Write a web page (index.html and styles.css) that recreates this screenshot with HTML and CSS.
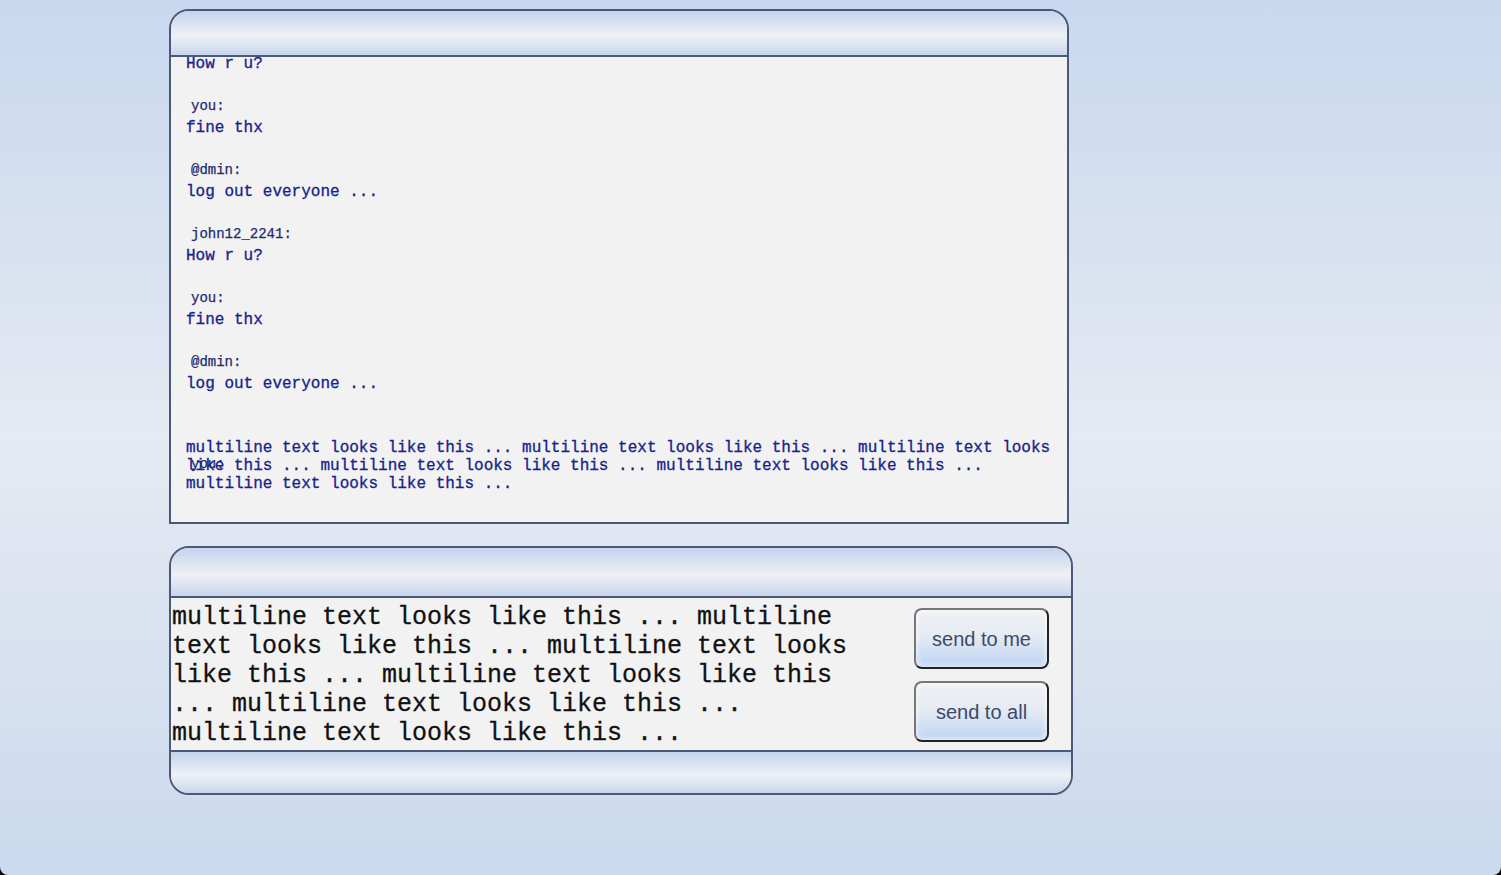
FILE: index.html
```html
<!DOCTYPE html>
<html>
<head>
<meta charset="utf-8">
<title>Chat</title>
<link rel="stylesheet" href="styles.css">
</head>
<body>
<div class="page">
  <section class="panel chat">
    <div class="bar bar-top"></div>
    <div class="log">
      <div class="log-inner">
        <div class="msg"><div class="who">john12_2241:</div><div class="text">How r u?</div></div>
        <div class="msg"><div class="who">you:</div><div class="text">fine thx</div></div>
        <div class="msg"><div class="who">@dmin:</div><div class="text">log out everyone ...</div></div>
        <div class="msg"><div class="who">john12_2241:</div><div class="text">How r u?</div></div>
        <div class="msg"><div class="who">you:</div><div class="text">fine thx</div></div>
        <div class="msg"><div class="who">@dmin:</div><div class="text">log out everyone ...</div></div>
        <div class="msg msg-last"><div class="who who-shifted">you:</div><div class="text">multiline text looks like this ... multiline text looks like this ... multiline text looks like this ... multiline text looks like this ... multiline text looks like this ... multiline text looks like this ...</div></div>
      </div>
    </div>
  </section>
  <section class="panel compose">
    <div class="bar bar-top compose-head"></div>
    <div class="compose-body">
      <div class="draft">multiline text looks like this ... multiline text looks like this ... multiline text looks like this ... multiline text looks like this ... multiline text looks like this ... multiline text looks like this ...</div>
      <div class="actions">
        <button class="btn">send to me</button>
        <button class="btn">send to all</button>
      </div>
    </div>
    <div class="bar bar-bottom"></div>
  </section>
</div>
</body>
</html>
```

FILE: styles.css
```css
html {
  background: #000;
}
body {
  margin: 0;
  height: 875px;
  overflow: hidden;
  border-radius: 0 0 8px 8px;
  background: linear-gradient(to bottom, #c8d8ef 0%, #d9e2f0 30%, #e6eaf2 50%, #dbe3f0 70%, #cad9ee 100%);
}
.page {
  padding: 9px 0 0 169px;
  display: flex;
  flex-direction: column;
  gap: 22px;
}
.panel {
  box-sizing: border-box;
  border: 2px solid #4b5878;
  border-radius: 20px 20px 0 0;
  background: #f2f2f2;
  overflow: hidden;
}
.chat {
  width: 900px;
  height: 515px;
  display: flex;
  flex-direction: column;
}
.bar {
  background: linear-gradient(to bottom, #c4d4ec 0%, #dbe3f0 30%, #eef0f5 55%, #dce4f1 78%, #c6d5ed 100%);
}
.bar-top {
  height: 44px;
  border-bottom: 2px solid #4b5878;
  flex: none;
}
.log {
  flex: 1;
  overflow: hidden;
  padding: 0 15px;
}
.log-inner {
  margin-top: -23px;
}
.msg {
  margin-bottom: 25px;
}
.who {
  font-family: "Liberation Mono", "Courier New", monospace;
  font-size: 14px;
  line-height: 16px;
  height: 16px;
  color: #1d2a6f;
  -webkit-text-stroke: 0.25px #1d2a6f;
  padding-left: 5px;
  margin-bottom: 5px;
}
.who-shifted {
  position: relative;
  top: 38px;
}
.text {
  font-family: "Liberation Mono", "Courier New", monospace;
  font-size: 16px;
  line-height: 18px;
  color: #17238c;
  -webkit-text-stroke: 0.3px #17238c;
}
.compose {
  width: 904px;
  border-radius: 20px;
}
.compose-head {
  height: 48px;
}
.compose-body {
  display: flex;
  justify-content: space-between;
  align-items: flex-start;
  height: 152px;
  border-bottom: 2px solid #4b5878;
  box-sizing: content-box;
}
.draft {
  width: 710px;
  padding: 5px 0 0 1px;
  font-family: "Liberation Mono", "Courier New", monospace;
  font-size: 25px;
  line-height: 29px;
  color: #111;
  -webkit-text-stroke: 0.3px #111;
}
.actions {
  display: flex;
  flex-direction: column;
  gap: 12px;
  margin: 10px 22px 0 0;
}
.btn {
  box-sizing: border-box;
  width: 135px;
  height: 61px;
  border: 2px solid;
  border-color: #777 #222 #222 #777;
  border-radius: 8px;
  background: linear-gradient(to bottom, #eff0f3 0%, #e6ebf3 45%, #bdd4f4 100%);
  box-shadow: inset 0 0 6px rgba(255, 255, 255, 0.9);
  font-family: "Liberation Sans", Arial, sans-serif;
  font-size: 20px;
  color: #3b4a6a;
  padding: 2px 0 0;
}
.bar-bottom {
  height: 41px;
}
```
